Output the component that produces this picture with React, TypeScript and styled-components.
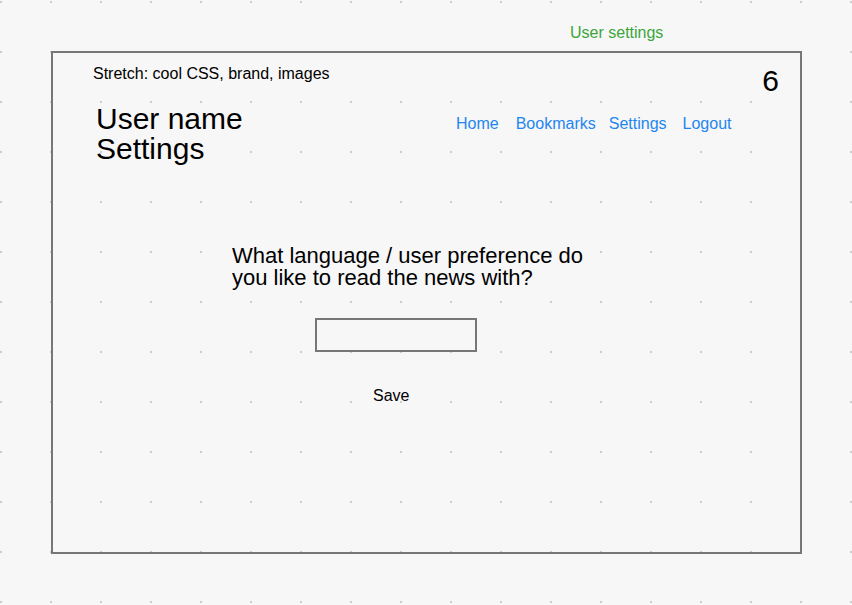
import React from "react";
import styled, { createGlobalStyle } from "styled-components";

const GlobalStyle = createGlobalStyle`
  html, body {
    margin: 0;
    padding: 0;
    background: #f7f7f7;
  }
  * { box-sizing: border-box; }
`;

const Canvas = styled.div`
  width: 852px;
  height: 605px;
  overflow: hidden;
  background-color: #f7f7f7;
  background-image: radial-gradient(circle at 1px 2px, #cdcdcd 1px, transparent 1.6px);
  background-size: 50px 50px;
  font-family: "Liberation Sans", Arial, Helvetica, sans-serif;
  color: #000;
`;

const Caption = styled.div`
  height: 51px;
  padding: 25px 0 0 570px;
  font-size: 16px;
  line-height: 16px;
  color: #3ca53c;
`;

const Frame = styled.section`
  margin-left: 51px;
  width: 751px;
  height: 503px;
  border: 2px solid #777777;
  display: flex;
  flex-direction: column;
`;

const NoteRow = styled.div`
  display: flex;
  justify-content: space-between;
  align-items: flex-start;
  padding: 13px 21px 0 40px;
`;

const Note = styled.div`
  font-size: 16px;
  line-height: 16px;
`;

const PageNumber = styled.div`
  font-size: 30px;
  line-height: 30px;
`;

const HeaderRow = styled.header`
  display: flex;
  align-items: flex-start;
  margin-top: 8px;
  padding-left: 43px;
`;

const UserTitle = styled.h1`
  flex: none;
  width: 360px;
  margin: 0;
  font-size: 30px;
  line-height: 30px;
  font-weight: normal;
`;

const Nav = styled.nav`
  display: flex;
  margin-top: 12px;
`;

const NavLink = styled.a<{ $gap: number }>`
  margin-left: ${(p) => p.$gap}px;
  font-size: 16px;
  line-height: 16px;
  color: #1e86ef;
  text-decoration: none;
  cursor: pointer;
`;

const Form = styled.form`
  display: flex;
  flex-direction: column;
  align-items: flex-start;
  margin-top: 81px;
  padding-left: 179px;
`;

const Question = styled.label`
  width: 370px;
  font-size: 22px;
  line-height: 22px;
`;

const TextField = styled.input`
  margin: 29px 0 0 83px;
  width: 162px;
  height: 34px;
  border: 2px solid #777777;
  background: transparent;
  outline: none;
  font: inherit;
`;

const SaveButton = styled.button`
  margin: 36px 0 0 141px;
  padding: 0;
  border: none;
  background: transparent;
  font-family: inherit;
  font-size: 16px;
  line-height: 16px;
  color: #000;
  cursor: pointer;
`;

const links = [
  { label: "Home", gap: 0 },
  { label: "Bookmarks", gap: 17 },
  { label: "Settings", gap: 13 },
  { label: "Logout", gap: 16 },
];

export default function App() {
  return (
    <>
      <GlobalStyle />
      <Canvas>
        <Caption>User settings</Caption>
        <Frame>
          <NoteRow>
            <Note>Stretch: cool CSS, brand, images</Note>
            <PageNumber>6</PageNumber>
          </NoteRow>
          <HeaderRow>
            <UserTitle>
              User name
              <br />
              Settings
            </UserTitle>
            <Nav>
              {links.map((l) => (
                <NavLink key={l.label} $gap={l.gap}>
                  {l.label}
                </NavLink>
              ))}
            </Nav>
          </HeaderRow>
          <Form onSubmit={(e) => e.preventDefault()}>
            <Question htmlFor="pref">
              What language / user preference do you like to read the news with?
            </Question>
            <TextField id="pref" type="text" />
            <SaveButton type="submit">Save</SaveButton>
          </Form>
        </Frame>
      </Canvas>
    </>
  );
}
